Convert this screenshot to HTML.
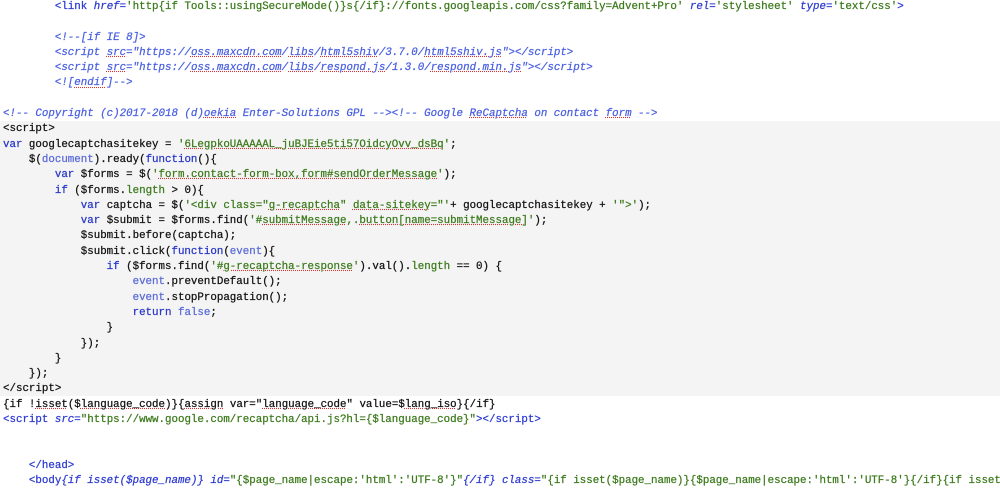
<!DOCTYPE html>
<html><head><meta charset="utf-8"><style>
html,body{margin:0;padding:0;background:#fff;width:1000px;height:489px;overflow:hidden}
pre{margin:0;position:absolute;top:0px;left:3px;font-family:"Liberation Mono",monospace;font-size:10.8px;line-height:15.3px;color:#111;white-space:pre;-webkit-text-stroke:0.25px}
.band{position:absolute;left:0;top:121px;width:1000px;height:275px;background:#f4f4f4}
.k{color:#2636c8}.s{color:#3c7a1c}.c{color:#4a60e0;font-style:italic}.t{color:#2c3ad0}.a{color:#2c3ad0;font-style:italic}.v{color:#5a6ad8}
.u{text-decoration:underline dotted #e03030}
</style></head><body>
<div class="band"></div>
<pre>        <span class="t">&lt;link</span> <span class="a">href</span><span class="t">=</span><span class="s">'http{if Tools::usingSecureMode()}s{/if}://fonts.googleapis.com/css?family=Advent+Pro'</span> <span class="a">rel</span><span class="t">=</span><span class="s">'stylesheet'</span> <span class="a">type</span><span class="t">=</span><span class="s">'text/css'</span><span class="t">&gt;</span>

        <span class="c">&lt;!--[if IE 8]&gt;</span>
        <span class="c">&lt;script <span class="u">src</span>="https://<span class="u">oss.maxcdn.com</span>/<span class="u">libs</span>/<span class="u">html5shiv</span>/3.7.0/<span class="u">html5shiv.js</span>"&gt;&lt;/script&gt;</span>
        <span class="c">&lt;script <span class="u">src</span>="https://<span class="u">oss.maxcdn.com</span>/<span class="u">libs</span>/<span class="u">respond.js</span>/1.3.0/<span class="u">respond.min.js</span>"&gt;&lt;/script&gt;</span>
        <span class="c">&lt;![<span class="u">endif</span>]--&gt;</span>

<span class="c">&lt;!-- Copyright (c)2017-2018 (d)<span class="u">oekia</span> Enter-Solutions GPL --&gt;&lt;!-- Google <span class="u">ReCaptcha</span> on contact <span class="u">form</span> --&gt;</span>
&lt;script&gt;
<span class="k">var</span> googlecaptchasitekey = <span class="s">'<span class="u">6LegpkoUAAAAAL_juBJEie5ti57OidcyOvv_dsBq</span>'</span>;
    $(<span class="v">document</span>).ready(<span class="k">function</span>(){
        <span class="k">var</span> $forms = $(<span class="s">'<span class="u">form.contact-form-box,form#sendOrderMessage</span>'</span>);
        <span class="k">if</span> ($forms.<span class="s">length</span> &gt; 0){
            <span class="k">var</span> captcha = $(<span class="s">'&lt;div class="<span class="u">g-recaptcha</span>" <span class="u">data-sitekey</span>="'</span>+ googlecaptchasitekey + <span class="s">'"&gt;'</span>);
            <span class="k">var</span> $submit = $forms.find(<span class="s">'#<span class="u">submitMessage</span>,.<span class="u">button[name=submitMessage]</span>'</span>);
            $submit.before(captcha);
            $submit.click(<span class="k">function</span>(<span class="v">event</span>){
                <span class="k">if</span> ($forms.find(<span class="s">'#<span class="u">g-recaptcha-response</span>'</span>).val().<span class="s">length</span> == 0) {
                    <span class="v">event</span>.preventDefault();
                    <span class="v">event</span>.stopPropagation();
                    <span class="k">return</span> <span class="v">false</span>;
                }
            });
        }
    });
&lt;/script&gt;
{if !<span class="u">isset</span>($<span class="u">language_code</span>)}{<span class="u">assign</span> var="<span class="u">language_code</span>" value=$<span class="u">lang_iso</span>}{/if}
<span class="t">&lt;script</span> <span class="a">src</span><span class="t">=</span><span class="s">"https://www.google.com/recaptcha/api.js?hl={$language_code}"</span><span class="t">&gt;&lt;/script&gt;</span>


    <span class="t">&lt;/head&gt;</span>
    <span class="t">&lt;body</span><span class="a">{if isset($page_name)}</span> <span class="a">id</span><span class="t">=</span><span class="s">"{$page_name|escape:'html':'UTF-8'}"</span><span class="a">{/if}</span> <span class="a">class</span><span class="t">=</span><span class="s">"{if isset($page_name)}{$page_name|escape:'html':'UTF-8'}{/if}{if isset</span></pre>
</body></html>
